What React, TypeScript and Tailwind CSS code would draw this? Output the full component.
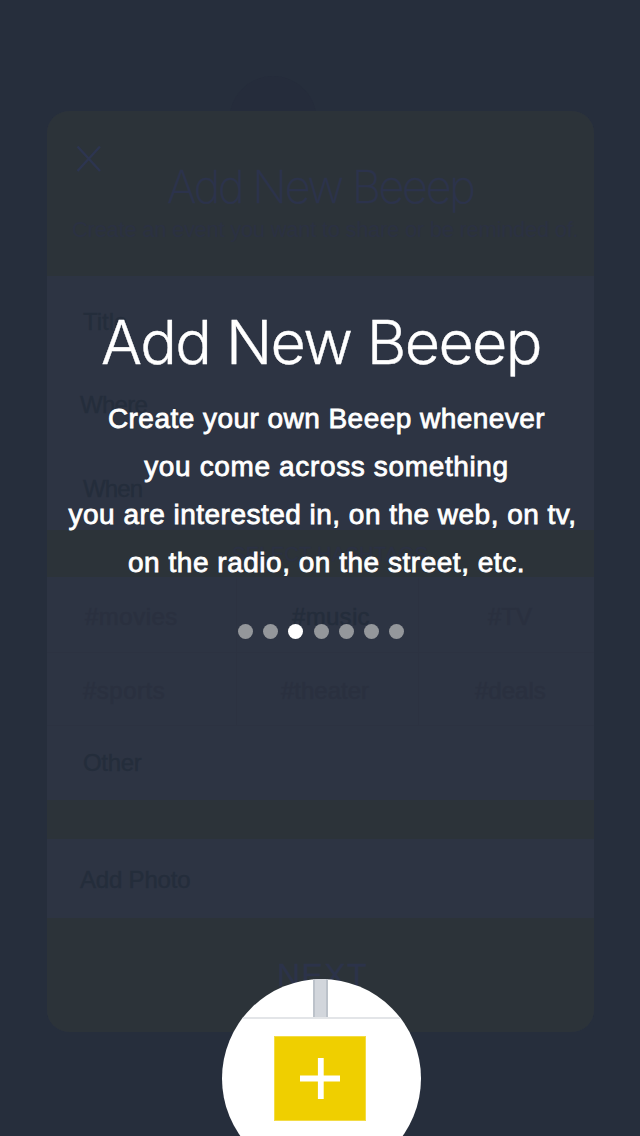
const pageFont = "font-['Liberation_Sans',Arial,sans-serif]";

const introLines = [
  { text: "Create your own Beeep whenever", style: "pl-[13px] tracking-[0.46px]" },
  { text: "you come across something", style: "pl-[13px] tracking-[0.64px]" },
  { text: "you are interested in, on the web, on tv,", style: "pl-[5px] tracking-[0.48px]" },
  { text: "on the radio, on the street, etc.", style: "pl-[13px] tracking-[0.52px]" },
];

const fields = [
  { label: "Title", style: "h-[85px] pl-9 pt-[32px]" },
  { label: "Where", style: "h-[84px] pl-[33px] pt-[30px] tracking-[-0.7px]" },
  { label: "When", style: "h-[85px] pl-9 pt-[30px] tracking-[-0.9px]" },
];

function HashTags() {
  const cell = "flex items-center border-[#2c3241]";
  return (
    <div className="grid h-[148px] grid-cols-[190px_182px_175px] grid-rows-[75px_73px] pt-px text-[24px] text-[#2a303f]">
      <div className={`${cell} border-r border-b pl-[38px] pt-1 tracking-[0.5px]`}>#movies</div>
      <div className={`${cell} border-r border-b pl-[55px] pt-1 tracking-[0.3px] text-[#242d3b] [-webkit-text-stroke:0.4px_#242d3b]`}>#music</div>
      <div className={`${cell} border-b pl-[69px] pt-1`}>#TV</div>
      <div className={`${cell} border-r border-b pl-[36px] pt-1 tracking-[0.5px]`}>#sports</div>
      <div className={`${cell} border-r border-b pl-[44px] pt-1`}>#theater</div>
      <div className={`${cell} border-b pl-[56px] pt-1`}>#deals</div>
    </div>
  );
}

function BeeepForm() {
  return (
    <div className="ml-[47px] flex h-[921px] w-[547px] flex-col overflow-hidden rounded-[22px] bg-[#2d3443] text-[24px] text-[#242d3b] [-webkit-text-stroke:0.3px_currentColor]">
      <header className="h-[165px] bg-[#2c3339] text-[#2c334c]">
        <div className="h-[49px] pl-[29px] pt-[34px]">
          <svg width="26" height="28" viewBox="0 0 26 28" fill="none" stroke="#2d3550" strokeWidth="2.4">
            <path d="M1.5 1.5 24 26M24 1.5 1.5 26" />
          </svg>
        </div>
        <h2 className="pl-[120px] font-['Inter',sans-serif] text-[45px] leading-[54px] font-extralight tracking-[-2.35px] whitespace-nowrap">Add New Beeep</h2>
        <p className="mt-px pl-[25px] text-[22px] leading-[30px] tracking-[-0.28px] whitespace-nowrap text-[#2b3142] [-webkit-text-stroke:0px]">Create an event you want to share or be reminded of.</p>
      </header>
      {fields.map((field) => (
        <div key={field.label} className={`${field.style} leading-[28px]`}>{field.label}</div>
      ))}
      <div className="h-[47px] bg-[#2c3339] pt-[10px] pl-[185px] text-[20px] leading-[28px] tracking-[0.3px] text-[#2b3143]">SELECT HASHTAGS</div>
      <HashTags />
      <div className="h-[75px] pt-[24px] pl-9 leading-[28px] tracking-[-0.3px]">Other</div>
      <div className="h-[39px] bg-[#2c3339]" />
      <div className="h-[79px] pt-[27px] pl-[33px] leading-[28px] tracking-[-0.2px]">Add Photo</div>
      <div className="h-[114px] bg-[#2c3339] pt-[41px] pl-[230px] text-[32px] leading-[32px] tracking-[1.4px] text-[#2c334a]">NEXT</div>
    </div>
  );
}

function AddBadge() {
  return (
    <div className="absolute top-[979px] left-[222px] h-[157px] w-[199px] overflow-hidden">
      <div className="flex h-[199px] flex-col items-center overflow-hidden rounded-full bg-white">
        <div className="-ml-[3px] h-[38px] w-[15px] border-x-2 border-[#bcc2ca] bg-[#d2d6dc]" />
        <div className="h-[2px] w-full bg-[#e3e5e8]" />
        <div className="mt-[17px] -ml-[3px] flex h-[85px] w-[92px] items-center justify-center border border-[#f3dc45] bg-[#efcf00]">
          <svg width="40" height="41" viewBox="0 0 40 41" fill="none" stroke="white" strokeWidth="5.8">
            <path d="M20.8 0v41M0 20.5h40" />
          </svg>
        </div>
      </div>
    </div>
  );
}

export default function App() {
  return (
    <main className={`relative h-[1136px] w-[640px] overflow-hidden bg-[#262e3c] pt-[111px] ${pageFont}`}>
      <div className="absolute top-[76px] left-[229px] h-[90px] w-[88px] rounded-[50%] bg-[#252c3b]" />
      <div className="relative">
        <BeeepForm />
      </div>
      <section className="absolute inset-0 flex flex-col items-center pt-[305px] text-white">
        <h1 className="ml-[2px] font-['Inter',sans-serif] text-[61px] leading-[74px] font-light tracking-[-1.65px] whitespace-nowrap [-webkit-text-stroke:0.4px_white]">Add New Beeep</h1>
        <div className="mt-[16px] text-center text-[28px] leading-[48px] whitespace-nowrap [-webkit-text-stroke:0.8px_white]">
          {introLines.map((line) => (
            <p key={line.text} className={line.style}>{line.text}</p>
          ))}
        </div>
        <div className="mt-[37px] ml-[2px] flex gap-[10.1px]">
          {[0, 1, 2, 3, 4, 5, 6].map((step) => (
            <span key={step} className={`size-[15px] rounded-full ${step === 2 ? "bg-white" : "bg-[#94979b]"}`} />
          ))}
        </div>
      </section>
      <AddBadge />
    </main>
  );
}
